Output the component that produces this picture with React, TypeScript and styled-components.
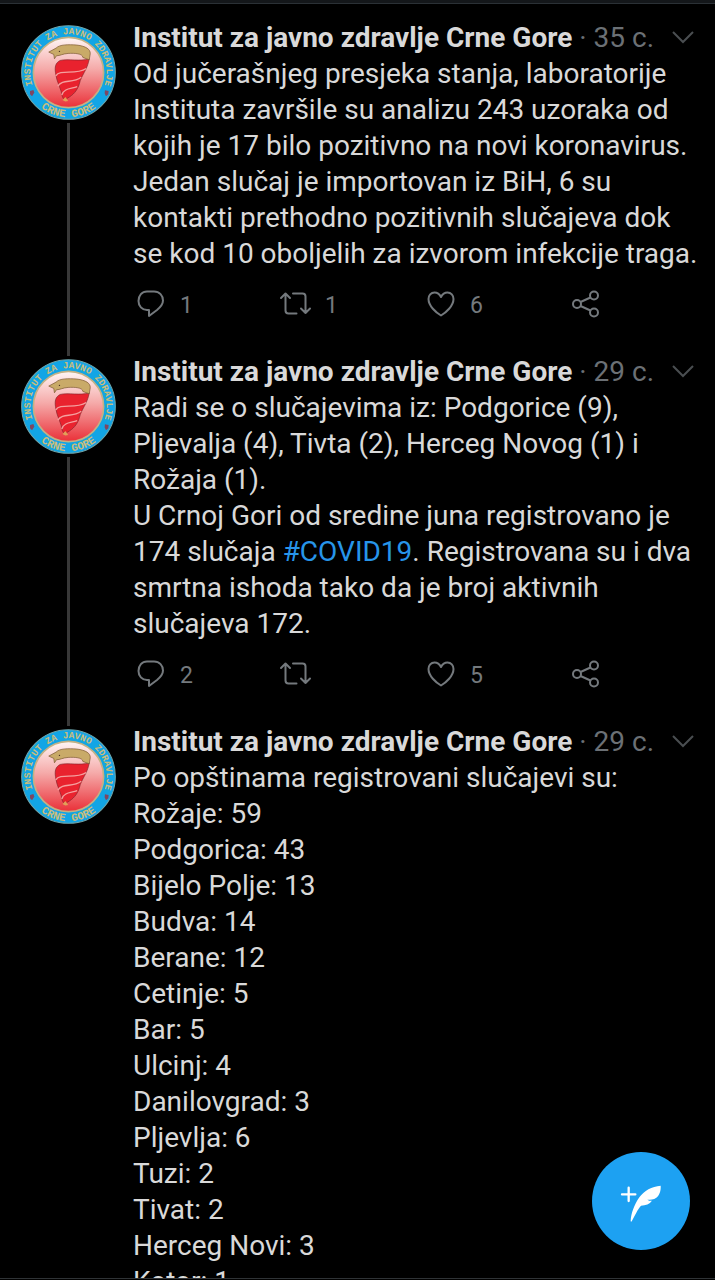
import React from 'react';
import styled, { createGlobalStyle } from 'styled-components';

const GlobalStyle = createGlobalStyle`
  * { box-sizing: border-box; }
  body {
    margin: 0;
    background: #000;
    font-family: Roboto, "Liberation Sans", sans-serif;
  }
`;

const Screen = styled.div`
  position: relative;
  height: 100vh;
  overflow: hidden;
  display: flex;
  flex-direction: column;
  background: #000;
  color: #d9d9d9;
`;

const TopEdge = styled.div`
  flex: none;
  height: 4px;
  background: #14171a;
  border-bottom: 1px solid #2b3136;
`;

const Timeline = styled.main`
  flex: 1;
  min-height: 0;
  overflow: hidden;
  padding: 16px 21px 0;
  border-bottom: 1px solid #2f3336;
  margin-bottom: 1px;
`;

const Tweet = styled.article`
  display: flex;
  gap: 17px;
`;

const Rail = styled.div`
  flex: none;
  width: 95px;
  display: flex;
  flex-direction: column;
  align-items: center;
  padding-top: 5px;
`;

const AvatarSvg = styled.svg`
  flex: none;
  display: block;
  width: 95px;
  height: 95px;
`;

const Thread = styled.div`
  flex: 1;
  width: 3px;
  margin: 3px 0 -2px;
  background: #383838;
`;

const Content = styled.div`
  flex: 1;
  min-width: 0;
`;

const Header = styled.header`
  display: flex;
  align-items: center;
  height: 36px;
  font-size: 28px;
  line-height: 36px;
  white-space: nowrap;
`;

const Name = styled.h2`
  margin: 0;
  font-size: 28px;
  font-weight: 700;
`;

const Time = styled.span`
  flex: 1;
  padding-left: 7px;
  color: #6b7075;
`;

const IconButton = styled.button`
  display: flex;
  align-items: center;
  padding: 0;
  border: 0;
  background: none;
  color: #74797d;
  font: inherit;
  cursor: pointer;
`;

const MenuButton = styled(IconButton)`
  color: #4a4e51;
`;

const Body = styled.p`
  margin: 0;
  font-size: 28px;
  line-height: 36px;
  white-space: pre-line;
  margin-right: -10px;
`;

const Hashtag = styled.a`
  color: #2795e9;
  text-decoration: none;
`;

const Actions = styled.div`
  display: grid;
  grid-template-columns: 1fr 1fr 1fr 36px;
  height: 36px;
  margin: 14px 0 32px;
  padding-right: 90px;
  font-size: 23px;
`;

const Count = styled.span`
  padding: 2px 0 0 11px;
`;

const Icon = styled.svg`
  flex: none;
  display: block;
  fill: none;
  stroke: currentColor;
`;

const Compose = styled.button`
  position: absolute;
  right: 25px;
  bottom: 30px;
  width: 98px;
  height: 98px;
  padding: 0;
  border: 0;
  border-radius: 50%;
  background: #1da1f2;
  cursor: pointer;
`;

const SealText = styled.text<{ $size: number }>`
  fill: #c9bd7c;
  font-family: "Liberation Mono", monospace;
  font-weight: 700;
  font-size: ${({ $size }) => $size}px;
`;

function Avatar({ id }: { id: string }) {
  return (
    <AvatarSvg viewBox="63 74 284 284" role="img" aria-label="Institut za javno zdravlje">
      <defs>
        <linearGradient id={`${id}-fill`} x1="0" y1="0" x2="0" y2="1">
          <stop offset="0" stopColor="#fff6f5" />
          <stop offset="0.45" stopColor="#f5aaa9" />
          <stop offset="1" stopColor="#ea3038" />
        </linearGradient>
        <path id={`${id}-top`} d="M101 262A114 114 0 1 1 309 262" />
        <path id={`${id}-bottom`} d="M84 272A133 133 0 0 0 326 272" />
      </defs>
      <circle cx="205" cy="216" r="140" fill="#12a5e5" stroke="#6fa7ad" strokeWidth="3" />
      <circle cx="205" cy="216" r="105" fill={`url(#${id}-fill)`} stroke="#c3b184" strokeWidth="5" />
      <SealText $size={28}>
        <textPath href={`#${id}-top`} startOffset="50%" textAnchor="middle">INSTITUT ZA JAVNO ZDRAVLJE</textPath>
      </SealText>
      <SealText $size={33}>
        <textPath href={`#${id}-bottom`} startOffset="50%" textAnchor="middle">CRNE GORE</textPath>
      </SealText>
      <path d="M90 271l10-3 3 8-7 11-6-6z M314 269l11 2-1 10-7 6-4-9z" fill="#7e4763" />
      <path
        d="M180 180C205 174 240 184 267 175C262 207 242 227 238 248C232 270 218 284 203 292L193 300L187 289C184 265 169 245 166 216C164 200 165 188 180 180Z"
        fill="#e9222e"
        stroke="#85242b"
        strokeWidth="2"
      />
      <path
        d="M167 226C180 204 225 226 258 204M173 257C188 234 216 250 243 230M185 283C193 261 214 266 231 258"
        fill="none"
        stroke="#f4a09f"
        strokeWidth="4"
      />
      <path
        d="M146 155L168 143C178 132 205 132 230 134C257 137 271 147 270 160L267 178L248 171C247 159 224 158 204 159C187 160 180 166 169 166L163 175L161 162Z"
        fill="#c9aa68"
        stroke="#79552f"
        strokeWidth="2"
      />
      <circle cx="178" cy="153" r="2" fill="#4f3524" />
      <path d="M187 298l9-9 8 12-9 2z" fill="#e2a057" />
    </AvatarSvg>
  );
}

function ReplyIcon() {
  return (
    <Icon width="36" height="36" viewBox="0 0 36 36" strokeWidth="2" strokeLinejoin="round">
      <path d="M14 5.500h7c5.500 0 9 4 9 9c0 4-3 7-6 9.500L16 30v-6h-2C9 24 5.500 20 5.500 15C5.500 9.500 9 5.500 14 5.500z" />
    </Icon>
  );
}

function RetweetIcon() {
  return (
    <Icon width="36" height="36" viewBox="0 0 36 36" strokeWidth="2" strokeLinecap="round" strokeLinejoin="round">
      <path d="M3 12l4.500-4.500L12 12M7.500 8v16.500q0 3 3 3h8M15 7.500h9.500q3 0 3 3V27M23 22.500l4.500 4.500 4.500-4.500" />
    </Icon>
  );
}

function HeartIcon() {
  return (
    <Icon width="36" height="36" viewBox="0 0 36 36" strokeWidth="2" strokeLinejoin="round">
      <path d="M18 11C19.500 8 22 6.500 24.500 6.500C28 6.500 30.500 9.500 30.500 13C30.500 20 23 26.500 18 29.500C13 26.500 5.500 20 5.500 13C5.500 9.500 8 6.500 11.500 6.500C14 6.500 16.500 8 18 11z" />
    </Icon>
  );
}

function ShareIcon() {
  return (
    <Icon width="36" height="36" viewBox="0 0 36 36" strokeWidth="2">
      <circle cx="9" cy="18" r="4" />
      <circle cx="26" cy="9.500" r="4" />
      <circle cx="26" cy="26.500" r="4" />
      <path d="M12.500 16L22.500 11.500M12.500 20L22.500 24.500" />
    </Icon>
  );
}

interface TweetData {
  id: string;
  age: string;
  body: React.ReactNode;
  replies?: number;
  retweets?: number;
  likes?: number;
  continued?: boolean;
}

const tweets: TweetData[] = [
  {
    id: 'tests',
    age: '35 с.',
    body: `Od jučerašnjeg presjeka stanja, laboratorije
      Instituta završile su analizu 243 uzoraka od
      kojih je 17 bilo pozitivno na novi koronavirus.
      Jedan slučaj je importovan iz BiH, 6 su
      kontakti prethodno pozitivnih slučajeva dok
      se kod 10 oboljelih za izvorom infekcije traga.`,
    replies: 1,
    retweets: 1,
    likes: 6,
    continued: true,
  },
  {
    id: 'cases',
    age: '29 с.',
    body: (
      <>
        {`Radi se o slučajevima iz: Podgorice (9),
        Pljevalja (4), Tivta (2), Herceg Novog (1) i
        Rožaja (1).
        U Crnoj Gori od sredine juna registrovano je
        174 slučaja `}
        <Hashtag href="#COVID19">#COVID19</Hashtag>
        {`. Registrovana su i dva
        smrtna ishoda tako da je broj aktivnih
        slučajeva 172.`}
      </>
    ),
    replies: 2,
    likes: 5,
    continued: true,
  },
  {
    id: 'towns',
    age: '29 с.',
    body: `Po opštinama registrovani slučajevi su:
      Rožaje: 59
      Podgorica: 43
      Bijelo Polje: 13
      Budva: 14
      Berane: 12
      Cetinje: 5
      Bar: 5
      Ulcinj: 4
      Danilovgrad: 3
      Pljevlja: 6
      Tuzi: 2
      Tivat: 2
      Herceg Novi: 3
      Kotor: 1`,
  },
];

function TweetItem({ tweet }: { tweet: TweetData }) {
  return (
    <Tweet>
      <Rail>
        <Avatar id={tweet.id} />
        {tweet.continued && <Thread />}
      </Rail>
      <Content>
        <Header>
          <Name>Institut za javno zdravlje Crne Gore</Name>
          <Time>· {tweet.age}</Time>
          <MenuButton aria-label="More">
            <Icon width="24" height="24" viewBox="0 0 24 24" strokeWidth="2">
              <path d="M3 6l10 10 10-10" />
            </Icon>
          </MenuButton>
        </Header>
        <Body>{tweet.body}</Body>
        {tweet.continued && (
          <Actions>
            <IconButton aria-label="Reply">
              <ReplyIcon />
              <Count>{tweet.replies}</Count>
            </IconButton>
            <IconButton aria-label="Retweet">
              <RetweetIcon />
              <Count>{tweet.retweets}</Count>
            </IconButton>
            <IconButton aria-label="Like">
              <HeartIcon />
              <Count>{tweet.likes}</Count>
            </IconButton>
            <IconButton aria-label="Share">
              <ShareIcon />
            </IconButton>
          </Actions>
        )}
      </Content>
    </Tweet>
  );
}

export default function App() {
  return (
    <Screen>
      <GlobalStyle />
      <TopEdge />
      <Timeline>
        {tweets.map((tweet) => (
          <TweetItem key={tweet.id} tweet={tweet} />
        ))}
      </Timeline>
      <Compose aria-label="New tweet">
        <svg width="98" height="98" viewBox="37 37 294 294" fill="#fff">
          <path d="M147 144v40M127 164h40" stroke="#fff" strokeWidth="7" strokeLinecap="round" />
          <path d="M153 243C154 222 163 196 178 174C194 152 216 140 243 138C244 152 240 166 230 174C222 180 212 180 203 180C209 184 213 184 217 183C210 193 198 197 184 198C174 208 165 230 157 243C155 247 153 247 153 243Z" />
        </svg>
      </Compose>
    </Screen>
  );
}
